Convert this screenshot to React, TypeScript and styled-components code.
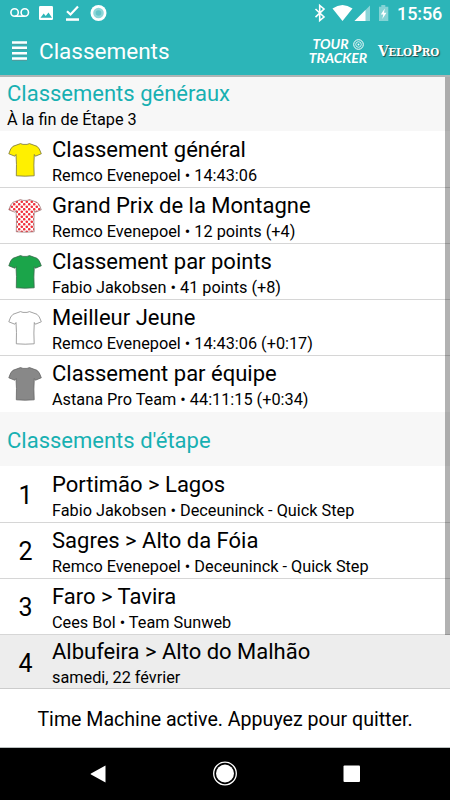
import React from 'react';
import styled, { createGlobalStyle } from 'styled-components';

const GlobalStyle = createGlobalStyle`
  *, *::before, *::after { box-sizing: border-box; }
  body { margin: 0; background: #fff; font-family: Roboto, sans-serif; color: #000; }
`;

const Screen = styled.div`
  width: 450px;
  height: 800px;
  display: flex;
  flex-direction: column;
  overflow: hidden;
  background: #fff;
`;

const StatusBar = styled.div`
  height: 27px;
  flex: none;
  display: flex;
  justify-content: space-between;
  background: #2cb5b8;
  color: #fff;
`;

const StatusIcons = styled.svg`
  display: block;
  height: 27px;
`;

const StatusRight = styled.div`
  display: flex;
`;

const Clock = styled.span`
  width: 53px;
  font-size: 18px;
  font-weight: 500;
  line-height: 28px;
  letter-spacing: -0.1px;
  white-space: nowrap;
`;

const AppBar = styled.header`
  height: 50px;
  flex: none;
  display: flex;
  align-items: center;
  padding: 0 11px 0 12px;
  background: #2cb5b8;
  border-bottom: 2px solid #aeb5b5;
  color: #fff;
`;

const MenuIcon = styled.svg`
  width: 15px;
  height: 20px;
`;

const Title = styled.h1`
  flex: 1;
  margin: 0 0 0 12px;
  font-size: 22.5px;
  line-height: 30px;
  font-weight: 400;
`;

const TourLogo = styled.div`
  width: 60px;
  display: flex;
  flex-direction: column;
  align-items: center;
  font: italic 700 14px/14px Lato, sans-serif;
  letter-spacing: 0;
`;

const LogoLine = styled.span`
  display: flex;
  align-items: center;
  gap: 4px;
`;

const VeloLogo = styled.div`
  width: 61px;
  margin-left: 10px;
  font: 700 15px/18px "DejaVu Serif Condensed", "DejaVu Serif", serif;
  font-stretch: condensed;
  letter-spacing: -0.2px;
  text-shadow: 1px 1px 1px #24494a;
  white-space: nowrap;
`;

const SmallCaps = styled.span`
  font-size: 11.5px;
`;

const Body = styled.main`
  height: 612px;
  flex: none;
  display: grid;
  grid-template-columns: 450px;
  overflow: hidden;
`;

const List = styled.div`
  grid-area: 1 / 1;
`;

const ScrollThumb = styled.div`
  grid-area: 1 / 1;
  justify-self: end;
  width: 5px;
  height: 558px;
  z-index: 1;
  background: rgba(0, 0, 0, 0.3);
`;

const SectionHead = styled.div`
  height: 54px;
  padding: 3px 0 0 7px;
  display: flex;
  flex-direction: column;
  justify-content: center;
  background: #f7f7f7;
`;

const SectionTitle = styled.h2`
  margin: 0;
  font-size: 22px;
  line-height: 28px;
  font-weight: 400;
  color: #17b0b2;
`;

const Row = styled.div<{ $active?: boolean }>`
  height: ${(p) => (p.$active ? 54 : 56)}px;
  display: flex;
  background: ${(p) => (p.$active ? '#ededed' : '#fff')};
  border-bottom: 1px solid ${(p) => (p.$active ? '#cccccc' : '#d6d6d6')};
`;

const Rows = styled.div<{ $plainEnd?: boolean }>`
  padding-top: 1px;
  ${(p) => p.$plainEnd && `${Row}:last-child { border-bottom: 0; }`}
`;

const Lead = styled.div`
  width: 50px;
  margin-right: 2px;
  height: 57px;
  flex: none;
  display: flex;
  align-items: center;
  justify-content: center;
  font-size: 25px;
`;

const StageNumber = styled(Lead)`
  padding-left: 1px;
`;

const Lines = styled.div<{ $tight?: boolean }>`
  padding-top: ${(p) => (p.$tight ? 3 : 4)}px;
`;

const RowTitle = styled.div`
  font-size: 22px;
  line-height: 28px;
  white-space: nowrap;
`;

const Detail = styled.div`
  font-size: 16.28px;
  line-height: 24px;
  white-space: nowrap;
`;

const JerseySvg = styled.svg`
  width: 34px;
  height: 36px;
  margin-bottom: 2px;
`;

const Banner = styled.button`
  height: 59px;
  flex: none;
  border: 0;
  border-bottom: 1px solid #b9bfbf;
  padding: 4px 0 0;
  background: #fff;
  color: #000;
  font: 400 19.6px/28px Roboto, sans-serif;
`;

const NavBar = styled.nav`
  height: 52px;
  flex: none;
  display: flex;
  background: #000;
`;

function Jersey({ fill, stroke }: { fill: string; stroke: string }) {
  return (
    <JerseySvg viewBox="0 0 34 36">
      <defs>
        <pattern id="dots" width="5" height="5" patternUnits="userSpaceOnUse">
          <rect width="5" height="5" fill="#fff" />
          <circle cx="1.25" cy="1.25" r="1.3" fill="#f0323c" />
          <circle cx="3.75" cy="3.75" r="1.3" fill="#f0323c" />
        </pattern>
      </defs>
      <path
        d="M12.500 1.600L15 2.400H19L21.500 1.600L29 4.300Q31.500 6 33.300 11.800L27.400 14.200L26.300 12.500Q25.500 23 26.200 33.800Q17 34.600 8.300 33.800Q8.800 22 8 12.500L6.800 14.200L.8 11.800Q2.500 6 5 4.300Z"
        fill={fill}
        stroke={stroke}
        strokeWidth="0.8"
      />
    </JerseySvg>
  );
}

const jerseys = [
  { title: 'Classement général', detail: 'Remco Evenepoel • 14:43:06', fill: '#fff000', stroke: '#77743d' },
  { title: 'Grand Prix de la Montagne', detail: 'Remco Evenepoel • 12 points (+4)', fill: 'url(#dots)', stroke: '#a08080' },
  { title: 'Classement par points', detail: 'Fabio Jakobsen • 41 points (+8)', fill: '#1ba54a', stroke: '#37694a' },
  { title: 'Meilleur Jeune', detail: 'Remco Evenepoel • 14:43:06 (+0:17)', fill: '#fff', stroke: '#8a8a8a' },
  { title: 'Classement par équipe', detail: 'Astana Pro Team • 44:11:15 (+0:34)', fill: '#888', stroke: '#666' },
];

const stages = [
  { title: 'Portimão > Lagos', detail: 'Fabio Jakobsen • Deceuninck - Quick Step' },
  { title: 'Sagres > Alto da Fóia', detail: 'Remco Evenepoel • Deceuninck - Quick Step' },
  { title: 'Faro > Tavira', detail: 'Cees Bol • Team Sunweb' },
  { title: 'Albufeira > Alto do Malhão', detail: 'samedi, 22 février', active: true },
];

export default function App() {
  return (
    <Screen>
      <GlobalStyle />
      <StatusBar>
        <StatusIcons width="120" viewBox="0 0 120 27">
          <g fill="none" stroke="#fff" strokeWidth="1.6">
            <circle cx="14.600" cy="12.500" r="3.700" />
            <circle cx="24.800" cy="12.500" r="3.700" />
            <path d="M14.600 16.200H24.800" />
          </g>
          <rect x="39" y="6" width="14" height="14" rx="1.200" fill="#fff" />
          <path d="M40.500 17.700L43.700 13.500L45.700 16L48.500 12.400L52 17.700Z" fill="#2cb5b8" />
          <path d="M67 11.300L70.500 14.500L78 6.500" fill="none" stroke="#fff" strokeWidth="2.200" />
          <rect x="66" y="18.300" width="13" height="2.500" fill="#fff" />
          <circle cx="98.500" cy="13" r="8" fill="#fff" />
          <circle cx="98.500" cy="13" r="5.300" fill="#8ed7d9" />
          <circle cx="98.500" cy="13" r="2.800" fill="#65c5c8" />
        </StatusIcons>
        <StatusRight>
          <StatusIcons width="87" viewBox="310 0 87 27">
            <path d="M315.500 9L324 17L319.700 20.500V5.500L324 9L315.500 17.200" fill="none" stroke="#fff" strokeWidth="1.600" />
            <path d="M332.500 8.500Q342.500 1.500 352.500 8.500L342.500 21Z" fill="#fff" />
            <path d="M370 5.500V21H354.500Z" fill="#8ad5d7" />
            <path d="M365.500 10V21H354.500Z" fill="#fff" />
            <path d="M381.300 5H385.300V6.800H388.300V21H379V6.800H381.300Z" fill="#84d3d5" />
            <path d="M384.800 8.500L380.800 14.500H383.300L382.300 19L386.500 12.700H384Z" fill="#fff" />
          </StatusIcons>
          <Clock>15:56</Clock>
        </StatusRight>
      </StatusBar>
      <AppBar>
        <MenuIcon viewBox="0 0 15 20">
          <path d="M0 3.500H15M0 8.800H15M0 14.200H15M0 19.500H15" stroke="#4e9d9f" strokeWidth="1" />
          <path d="M0 1.500H15M0 6.800H15M0 12.200H15M0 17.500H15" stroke="#fff" strokeWidth="2.600" />
        </MenuIcon>
        <Title>Classements</Title>
        <TourLogo>
          <LogoLine>
            TOUR
            <svg width="11" height="11" viewBox="0 0 11 11" fill="none" stroke="#fff">
              <circle cx="5.500" cy="5.500" r="4.800" strokeWidth="1" />
              <circle cx="5.500" cy="5.500" r="2.800" strokeWidth=".8" />
              <circle cx="5.500" cy="5.500" r="1" fill="#fff" stroke="none" />
            </svg>
          </LogoLine>
          <LogoLine>TRACKER</LogoLine>
        </TourLogo>
        <VeloLogo>V<SmallCaps>ELO</SmallCaps>P<SmallCaps>RO</SmallCaps></VeloLogo>
      </AppBar>
      <Body>
        <List>
          <SectionHead>
            <SectionTitle>Classements généraux</SectionTitle>
            <Detail>À la fin de Étape 3</Detail>
          </SectionHead>
          <Rows $plainEnd>
            {jerseys.map((j) => (
              <Row key={j.title}>
                <Lead><Jersey fill={j.fill} stroke={j.stroke} /></Lead>
                <Lines>
                  <RowTitle>{j.title}</RowTitle>
                  <Detail>{j.detail}</Detail>
                </Lines>
              </Row>
            ))}
          </Rows>
          <SectionHead>
            <SectionTitle>Classements d'étape</SectionTitle>
          </SectionHead>
          <Rows>
            {stages.map((s, i) => (
              <Row key={s.title} $active={s.active}>
                <StageNumber>{i + 1}</StageNumber>
                <Lines $tight={s.active}>
                  <RowTitle>{s.title}</RowTitle>
                  <Detail>{s.detail}</Detail>
                </Lines>
              </Row>
            ))}
          </Rows>
        </List>
        <ScrollThumb />
      </Body>
      <Banner>Time Machine active. Appuyez pour quitter.</Banner>
      <NavBar>
        <svg width="450" height="52" viewBox="0 0 450 52" fill="#fff">
          <path d="M105.500 17.500V34.500L91 26.500Q90 26 91 25.500Z" />
          <circle cx="225" cy="25.500" r="11.300" fill="none" stroke="#fff" strokeWidth="1.300" />
          <circle cx="225" cy="25.500" r="9" />
          <rect x="343.500" y="17.500" width="16.500" height="16.500" rx="1" />
        </svg>
      </NavBar>
    </Screen>
  );
}
